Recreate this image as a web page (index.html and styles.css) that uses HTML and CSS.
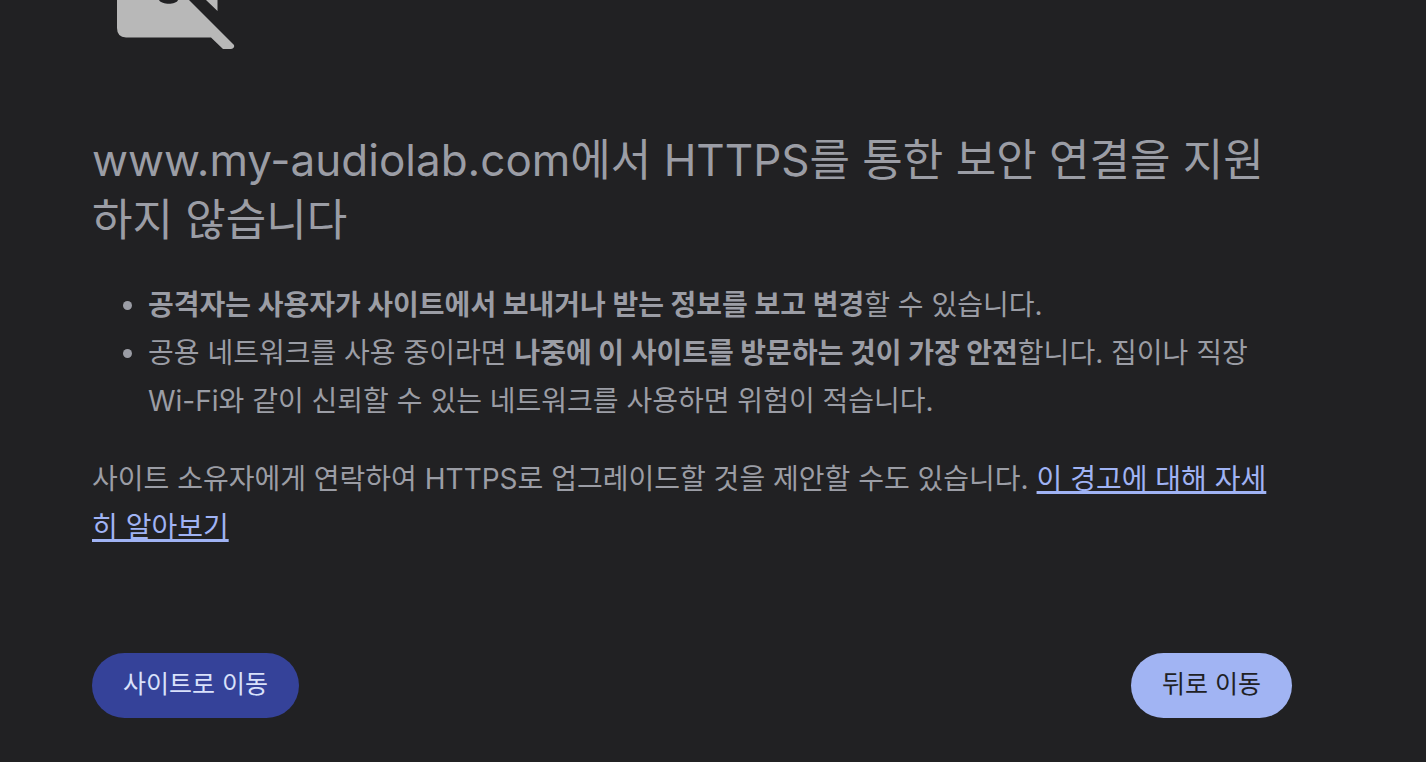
FILE: index.html
```html
<!DOCTYPE html>
<html lang="ko">
<head>
<meta charset="utf-8">
<title>보안 연결을 지원하지 않습니다</title>
<link rel="stylesheet" href="styles.css">
</head>
<body>
<main class="interstitial">
  <svg class="warning-icon" viewBox="0 0 144 49" aria-hidden="true">
    <path class="icon-fill" d="M25 0V28Q25 37 34 37.500H119L131 49H139Q143 48 142 45L97 0H86C84 5 70 5 67 0ZM114 0H125.500V11Z"/>
  </svg>
  <h1 class="title">www.my-audiolab.com에서 HTTPS를 통한 보안 연결을 지원하지 않습니다</h1>
  <ul class="advice">
    <li><strong>공격자는 사용자가 사이트에서 보내거나 받는 정보를 보고 변경</strong>할 수 있습니다.</li>
    <li>공용 네트워크를 사용 중이라면 <strong>나중에 이 사이트를 방문하는 것이 가장 안전</strong>합니다. 집이나 직장 Wi-Fi와 같이 신뢰할 수 있는 네트워크를 사용하면 위험이 적습니다.</li>
  </ul>
  <p class="note">사이트 소유자에게 연락하여 HTTPS로 업그레이드할 것을 제안할 수도 있습니다. <a class="link" href="#">이 경고에 대해 자세히 알아보기</a></p>
  <div class="actions">
    <button class="button button-secondary" type="button">사이트로 이동</button>
    <button class="button button-primary" type="button">뒤로 이동</button>
  </div>
</main>
</body>
</html>
```
FILE: styles.css
```css
body {
  margin: 0;
  background: #212123;
  color: #9b9da5;
  font-family: Inter, "Noto Sans CJK KR", sans-serif;
  font-size: 28px;
  line-height: 48px;
}

.interstitial {
  max-width: 1200px;
  margin: 0 134px 0 92px;
}

.warning-icon {
  display: block;
  width: 144px;
  height: 49px;
}

.icon-fill {
  fill: #b8b8b8;
}

.title {
  margin: 81px 0 31px;
  font-size: 44px;
  font-weight: 400;
  line-height: 60px;
}

.advice {
  margin: 0;
  padding-left: 56px;
}

.note {
  margin: 30px 0 0;
}

.link {
  color: #a0b3f4;
  text-decoration-thickness: 3px;
}

.actions {
  display: flex;
  justify-content: space-between;
  margin-top: 102px;
}

.button {
  height: 65px;
  padding: 0 31px 4px;
  border: 0;
  border-radius: 33px;
  font: inherit;
  font-size: 25px;
}

.button-secondary {
  background: #354299;
  color: #d9e1fb;
}

.button-primary {
  background: #a1b4f3;
  color: #202124;
}
```
